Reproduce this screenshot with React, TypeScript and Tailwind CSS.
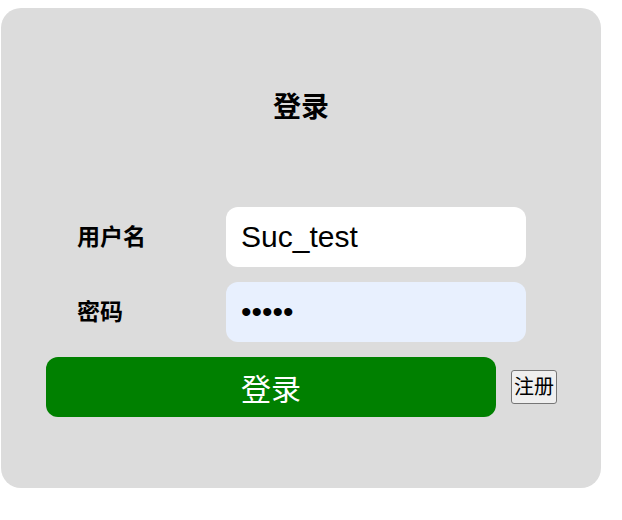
import { useState } from "react";

export default function App() {
  const [username, setUsername] = useState("Suc_test");
  const [password, setPassword] = useState("12345");

  return (
    <div className="pt-2 pl-px font-['Liberation_Sans','Noto_Sans_CJK_SC',sans-serif] text-black">
      <div className="w-[600px] h-[480px] rounded-[20px] bg-[#dcdcdc] flex flex-col">
        <h2 className="mt-[86px] text-center text-[28px] leading-[28px] font-bold">登录</h2>

        <div className="mt-[85px] flex flex-col gap-[15px]">
          <div className="flex items-center pl-[76px]">
            <label className="w-[149px] text-[23px] font-bold">用户名</label>
            <input
              className="w-[300px] h-[60px] rounded-[12px] bg-white px-[15px] text-[30px] outline-none"
              value={username}
              onChange={(e) => setUsername(e.target.value)}
            />
          </div>
          <div className="flex items-center pl-[76px]">
            <label className="w-[149px] text-[23px] font-bold">密码</label>
            <input
              type="password"
              className="w-[300px] h-[60px] rounded-[12px] bg-[#e8f0fe] px-[15px] text-[30px] outline-none"
              value={password}
              onChange={(e) => setPassword(e.target.value)}
            />
          </div>
          <div className="flex items-center gap-[15px] pl-[45px]">
            <button className="w-[450px] h-[60px] rounded-[12px] bg-[#008000] pt-[5px] text-white text-[30px]">
              登录
            </button>
            <button className="w-[46px] h-[34px] rounded-[3px] border border-[#767676] bg-[#efefef] text-[20px] leading-none">
              注册
            </button>
          </div>
        </div>
      </div>
    </div>
  );
}
